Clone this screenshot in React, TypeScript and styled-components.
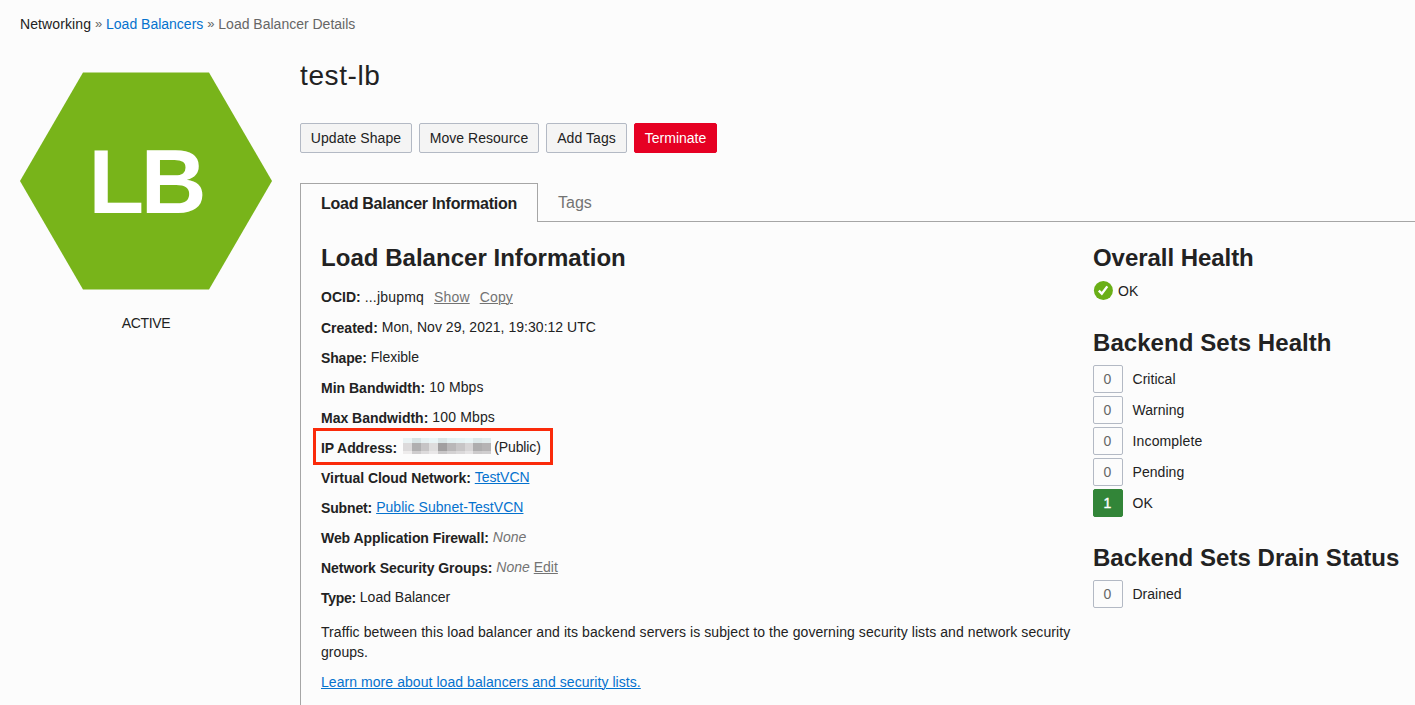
import React from "react";
import styled, { createGlobalStyle } from "styled-components";

const GlobalStyle = createGlobalStyle`
  * { box-sizing: border-box; }
  html, body { margin: 0; padding: 0; }
  body {
    background: #fcfcfc;
    color: #222;
    font: 14px/20px "Helvetica Neue", "Liberation Sans", Arial, sans-serif;
    overflow: hidden;
  }
`;

const Page = styled.div`
  height: 705px;
  overflow: hidden;
  display: flex;
  flex-direction: column;
  padding: 14px 0 0 20px;
`;

const T = styled.span<{ $ls?: number }>`
  letter-spacing: ${(p) => p.$ls ?? 0}px;
  white-space: nowrap;
`;

const Breadcrumb = styled.nav`
  display: flex;
  gap: 4px;
  height: 20px;
  color: #666;
`;

const Crumb = styled(T)<{ $tone?: "link" | "root" }>`
  color: ${(p) => (p.$tone === "link" ? "#0572ce" : p.$tone === "root" ? "#222" : "#666")};
`;

const Separator = styled.span`
  width: 7px;
  font-size: 13px;
`;

const Columns = styled.div`
  flex: 1;
  display: grid;
  grid-template-columns: 252px 1fr;
  column-gap: 28px;
`;

const StatusColumn = styled.aside`
  display: flex;
  flex-direction: column;
  align-items: center;
  padding-top: 38px;
`;

const StatusLabel = styled.div`
  margin-top: 23px;
`;

const Content = styled.main`
  display: flex;
  flex-direction: column;
  padding-top: 22px;
  min-width: 0;
`;

const Title = styled.h1`
  margin: 0;
  font-size: 28px;
  line-height: 40px;
  font-weight: 400;
`;

const Toolbar = styled.div`
  display: flex;
  gap: 7px;
  margin-top: 27px;
`;

const Button = styled.button<{ $width: number; $danger?: boolean }>`
  width: ${(p) => p.$width}px;
  height: 30px;
  padding: 0;
  display: flex;
  align-items: center;
  justify-content: center;
  border: 1px solid ${(p) => (p.$danger ? "#e60023" : "#b3b9c4")};
  border-radius: 2px;
  background: ${(p) => (p.$danger ? "#e60023" : "#f4f4f4")};
  color: ${(p) => (p.$danger ? "#fff" : "#222")};
  font: inherit;
`;

const Tabs = styled.div`
  display: flex;
  height: 39px;
  margin-top: 30px;
`;

const ActiveTab = styled.div`
  width: 238px;
  padding: 10px 0 0 20px;
  border: 1px solid #a6a6a6;
  border-bottom: 0;
  font-size: 16px;
  font-weight: 700;
`;

const Tab = styled.div`
  flex: 1;
  padding: 10px 0 0 20px;
  border-bottom: 1px solid #a6a6a6;
  font-size: 16px;
  color: #737373;
`;

const Panel = styled.section`
  flex: 1;
  display: grid;
  grid-template-columns: 772px 1fr;
  padding: 20px 0 0 20px;
  border-left: 1px solid #a6a6a6;
`;

const Heading = styled.h2`
  margin: 0;
  font-size: 24px;
  line-height: 32px;
  font-weight: 700;
  white-space: nowrap;
`;

const Details = styled.div`
  margin-top: 8px;
  display: flex;
  flex-direction: column;
`;

const Row = styled.div`
  position: relative;
  display: flex;
  align-items: flex-start;
  height: 30px;
  padding-top: 5px;
  white-space: nowrap;
`;

const Label = styled(T)<{ $raised?: boolean }>`
  font-weight: 700;
  padding-top: ${(p) => (p.$raised ? 0 : 1)}px;
  margin-right: 4px;
`;

const Link = styled(T)<{ $muted?: boolean; $gap?: number }>`
  color: ${(p) => (p.$muted ? "#737373" : "#0572ce")};
  margin-left: ${(p) => p.$gap ?? 0}px;
  text-decoration: underline;
  text-underline-offset: 1px;
  text-decoration-thickness: 1px;
`;

const None = styled(T)`
  font-style: italic;
  color: #737373;
`;

const Highlight = styled.div`
  position: absolute;
  left: -8px;
  top: -4px;
  width: 240px;
  height: 37px;
  border: 3px solid #fa2a0a;
`;

const Mosaic = styled.svg`
  display: block;
  margin: 1px 3px 0 2px;
`;

const Note = styled.p`
  margin: 10px 0 0;
  white-space: nowrap;
`;

const LearnMore = styled.div`
  margin-top: 10px;
`;

const Overall = styled.div`
  display: flex;
  align-items: center;
  gap: 5px;
  height: 20px;
  margin: 7px 0 26px;
`;

const CountList = styled.div`
  display: flex;
  flex-direction: column;
  gap: 3px;
  margin: 6px 0 25px;
`;

const CountRow = styled.div`
  display: flex;
  align-items: center;
  gap: 9.5px;
`;

const Count = styled.span<{ $on?: boolean }>`
  width: 30px;
  height: 28px;
  display: flex;
  align-items: center;
  justify-content: center;
  padding-right: 1px;
  border: 1px solid ${(p) => (p.$on ? "#328538" : "#b3b9c4")};
  border-radius: 2px;
  background: ${(p) => (p.$on ? "#328538" : "transparent")};
  color: ${(p) => (p.$on ? "#fff" : "#666")};
  -webkit-text-stroke: ${(p) => (p.$on ? "0.4px #fff" : "0")};
`;

const Hexagon = () => (
  <svg width="252" height="218" viewBox="0 0 252 218">
    <polygon points="63,0.5 189,0.5 252,109 189,217.5 63,217.5 0,109" fill="#78b41a" />
    <text x="68.4 120.7" y="141" fill="#fff" fontSize="91" fontWeight="700" fontFamily="'Liberation Sans', Arial, sans-serif">
      LB
    </text>
  </svg>
);

const mosaicRows = [
  { y: 0, h: 5, c: ["#eaf3f4", "#d7e3e4", "#e6f0f1", "#e9f5f6", "#d9e5e6", "#e3f0f1", "#e5f2f3", "#e9f5f6", "#dce8e9", "#e2eced"] },
  { y: 5, h: 8, c: ["#dcdadb", "#b0afb0", "#c6c4c5", "#dedddd", "#a19fa0", "#b9b7b8", "#c7c5c6", "#d7d5d6", "#aeadae", "#b5b3b4"] },
  { y: 13, h: 3, c: ["#eeecec", "#cfcdce", "#dddbdc", "#e9e7e8", "#c9c7c8", "#d4d2d3", "#dbd9da", "#e5e3e4", "#cdcbcc", "#d0cecf"] },
];

const MaskedAddress = () => (
  <Mosaic width="88" height="16" viewBox="0 0 88 16" shapeRendering="crispEdges">
    {mosaicRows.map((r) =>
      r.c.map((c, i) => <rect key={`${r.y}-${i}`} x={i * 8.8} y={r.y} width={8.8} height={r.h} fill={c} />)
    )}
  </Mosaic>
);

const CheckIcon = () => (
  <svg width="20" height="20" viewBox="0 0 20 20">
    <circle cx="10.4" cy="9.5" r="9.5" fill="#6aaf17" />
    <path d="M5.8 9.7 L8.8 12.7 L14.3 5.4" fill="none" stroke="#fff" strokeWidth="2.4" />
  </svg>
);

const backendCounts: [number, string, number][] = [
  [0, "Critical", 0.03],
  [0, "Warning", 0.03],
  [0, "Incomplete", 0.15],
  [0, "Pending", 0.05],
  [1, "OK", 0],
];

export default function App() {
  return (
    <Page>
      <GlobalStyle />
      <Breadcrumb>
        <Crumb $tone="root" $ls={0.1}>Networking</Crumb>
        <Separator>»</Separator>
        <Crumb $tone="link">Load Balancers</Crumb>
        <Separator>»</Separator>
        <Crumb>Load Balancer Details</Crumb>
      </Breadcrumb>
      <Columns>
        <StatusColumn>
          <Hexagon />
          <StatusLabel><T $ls={-0.35}>ACTIVE</T></StatusLabel>
        </StatusColumn>
        <Content>
          <Title><T $ls={0.6}>test-lb</T></Title>
          <Toolbar>
            <Button $width={112}><T $ls={0.07}>Update Shape</T></Button>
            <Button $width={120}><T $ls={0.03}>Move Resource</T></Button>
            <Button $width={81}><T $ls={0.07}>Add Tags</T></Button>
            <Button $width={83} $danger><T>Terminate</T></Button>
          </Toolbar>
          <Tabs>
            <ActiveTab><T $ls={-0.27}>Load Balancer Information</T></ActiveTab>
            <Tab><T>Tags</T></Tab>
          </Tabs>
          <Panel>
            <div>
              <Heading><T $ls={0.03}>Load Balancer Information</T></Heading>
              <Details>
                <Row>
                  <Label $raised>OCID:</Label>
                  <T $ls={0.2}>...jbupmq</T>
                  <Link $muted $gap={10} $ls={0.15}>Show</Link>
                  <Link $muted $gap={10} $ls={0.15}>Copy</Link>
                </Row>
                <Row><Label>Created:</Label><T $ls={0.03}>Mon, Nov 29, 2021, 19:30:12 UTC</T></Row>
                <Row><Label $ls={-0.16}>Shape:</Label><T>Flexible</T></Row>
                <Row><Label>Min Bandwidth:</Label><T $ls={0.1}>10 Mbps</T></Row>
                <Row><Label>Max Bandwidth:</Label><T $ls={0.14}>100 Mbps</T></Row>
                <Row>
                  <Highlight />
                  <Label $ls={-0.08}>IP Address:</Label>
                  <MaskedAddress />
                  <T $ls={-0.1}>(Public)</T>
                </Row>
                <Row><Label $ls={-0.04}>Virtual Cloud Network:</Label><Link $ls={-0.08}>TestVCN</Link></Row>
                <Row><Label $ls={-0.14}>Subnet:</Label><Link $ls={0.05}>Public Subnet-TestVCN</Link></Row>
                <Row><Label $ls={-0.07}>Web Application Firewall:</Label><None>None</None></Row>
                <Row><Label $ls={-0.06}>Network Security Groups:</Label><None>None</None><Link $muted $gap={4}>Edit</Link></Row>
                <Row><Label $ls={-0.3}>Type:</Label><T>Load Balancer</T></Row>
              </Details>
              <Note>
                <T $ls={0.082}>Traffic between this load balancer and its backend servers is subject to the governing security lists and network security</T>
                <br />
                <T $ls={0.05}>groups.</T>
              </Note>
              <LearnMore><Link $ls={0.06}>Learn more about load balancers and security lists.</Link></LearnMore>
            </div>
            <div>
              <Heading><T $ls={-0.05}>Overall Health</T></Heading>
              <Overall><CheckIcon /><T>OK</T></Overall>
              <Heading><T $ls={0.06}>Backend Sets Health</T></Heading>
              <CountList>
                {backendCounts.map(([n, label, ls]) => (
                  <CountRow key={label}><Count $on={n > 0}>{n}</Count><T $ls={ls}>{label}</T></CountRow>
                ))}
              </CountList>
              <Heading><T $ls={0.04}>Backend Sets Drain Status</T></Heading>
              <CountList>
                <CountRow><Count>0</Count><T>Drained</T></CountRow>
              </CountList>
            </div>
          </Panel>
        </Content>
      </Columns>
    </Page>
  );
}
